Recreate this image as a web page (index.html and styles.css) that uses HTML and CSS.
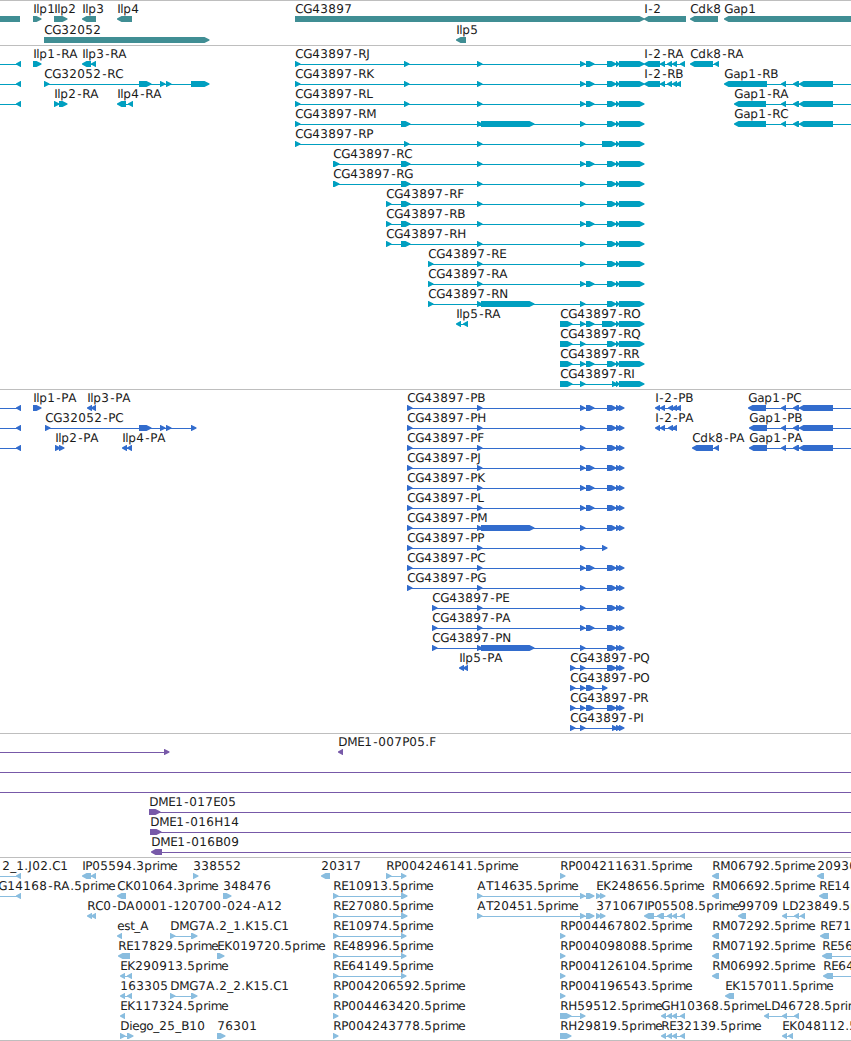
FILE: index.html
```html
<!DOCTYPE html>
<html lang="en">
<head>
    <meta charset="UTF-8">
    <meta name="viewport" content="width=device-width, initial-scale=1.0">
    <title>Genome Browser - CG43897</title>
    <link rel="stylesheet" href="styles.css">
</head>
<body>
    <main class="browser">
        <section class="track genes" id="genes"></section>
        <section class="track transcripts" id="transcripts"></section>
        <section class="track cds" id="cds"></section>
        <section class="track clones" id="clones"></section>
        <section class="track ests" id="ests"></section>
    </main>
    <script src="script.js"></script>
</body>
</html>
```

FILE: styles.css
```css
* {
    margin: 0;
    padding: 0;
    box-sizing: border-box;
}

body {
    background: #fff;
    font-family: "DejaVu Sans", sans-serif;
}

.browser {
    display: flex;
    flex-direction: column;
    width: 851px;
    overflow: hidden;
    border-bottom: 1px solid #bebebe;
}

.track {
    border-top: 1px solid #bebebe;
}

.track svg {
    display: block;
    width: 100%;
    height: 100%;
}

.track text {
    font-size: 12px;
    fill: #1a1a1a;
    text-rendering: geometricPrecision;
}

.shape,
.line {
    fill: currentColor;
}

.genes {
    height: 45px;
    color: #408e94;
}

.transcripts {
    height: 344px;
    color: #009fc0;
}

.cds {
    height: 344px;
    color: #326ccd;
}

.clones {
    height: 124px;
    color: #7759a8;
}

.ests {
    height: 183px;
    color: #89bddf;
}
```

FILE: script.js
```js
const NS = 'http://www.w3.org/2000/svg';
const WIDTH = 851;
const HEAD = 5;

// label letter widths, digits are 8
const advance = {
    A: 9, B: 8, C: 8, D: 9, E: 7, F: 7, G: 9, H: 9, I: 3, J: 4, K: 8, L: 7, M: 10,
    N: 9, O: 9, P: 7, Q: 9, R: 8, T: 7, a: 7, d: 8, e: 7, g: 7, i: 3, k: 7, l: 3,
    m: 10.5, o: 7, p: 8, r: 4.5, s: 6, t: 4, '-': 6, '.': 4, '_': 6
};

// shared exons of CG43897
const ex2 = '580-585 586-594';
const end = '607-616 616-619 619-644';
const cend = '607-616 616-621 619-624';
const gap = '781-786 793-799 799-833 900-940';

// each row is a list of [label, label x, strand, spans]
const tracks = {
    genes: [
        [['', 0, '-', '-10-20'], ['Ilp1', 33, '+', '33-41'], ['Ilp2', 54, '+', '54-67'],
         ['Ilp3', 82, '-', '82-96'], ['Ilp4', 117, '-', '117-132'], ['CG43897', 295, '+', '295-644'],
         ['I-2', 644, '-', '644-686'], ['Cdk8', 690, '-', '690-718'], ['Gap1', 724, '-', '724-900']],
        [['CG32052', 44, '+', '44-209'], ['Ilp5', 456, '-', '456-466']]
    ],
    transcripts: [
        [['', 0, '-', '-20--10 16-21'], ['Ilp1-RA', 33, '+', '33-41'], ['Ilp3-RA', 82, '-', '82-91 91-96'],
         ['CG43897-RJ', 295, '+', `295-300 404-409 477-482 ${ex2} ${end}`],
         ['I-2-RA', 644, '-', '644-660 660-665 667-672 672-677 680-685'], ['Cdk8-RA', 690, '-', '690-713 714-719']],
        [['', 0, '-', '-20--10 16-21'], ['CG32052-RC', 44, '+', '44-49 139-151 160-165 166-171 191-209'],
         ['CG43897-RK', 295, '+', `295-300 404-409 477-482 ${ex2} ${end}`],
         ['I-2-RB', 644, '-', '644-660 660-665 667-672 672-677 676-681'], ['Gap1-RB', 724, '-', `724-767 ${gap}`]],
        [['', 0, '-', '-20--10 16-21'], ['Ilp2-RA', 54, '+', '54-59 59-67'], ['Ilp4-RA', 117, '-', '117-126 128-133'],
         ['CG43897-RL', 295, '+', `295-300 404-409 477-482 ${ex2} ${end}`], ['Gap1-RA', 734, '-', `734-766 ${gap}`]],
        [['CG43897-RM', 295, '+', `295-300 401-410 477-482 481-534 580-585 ${end}`], ['Gap1-RC', 734, '-', `734-766 ${gap}`]],
        [['CG43897-RP', 295, '+', '295-300 404-409 477-482 580-585 602-616 616-619 619-644']],
        [['CG43897-RC', 333, '+', `333-339 401-410 477-482 ${ex2} ${end}`]],
        [['CG43897-RG', 333, '+', `333-339 401-410 477-482 580-585 ${end}`]],
        [['CG43897-RF', 386, '+', `386-391 401-410 477-482 580-585 ${end}`]],
        [['CG43897-RB', 386, '+', `386-391 401-410 477-482 ${ex2} ${end}`]],
        [['CG43897-RH', 386, '+', `386-391 401-410 477-482 580-585 ${end}`]],
        [['CG43897-RE', 428, '+', `428-433 477-482 580-585 ${end}`]],
        [['CG43897-RA', 428, '+', `428-433 477-482 ${ex2} ${end}`]],
        [['CG43897-RN', 428, '+', `428-433 477-482 481-534 580-585 ${end}`]],
        [['Ilp5-RA', 456, '-', '456-461 463-468'], ['CG43897-RO', 560, '+', `560-572 ${ex2} 602-616 616-619 619-644`]],
        [['CG43897-RQ', 560, '+', `560-572 580-585 ${end}`]],
        [['CG43897-RR', 560, '+', `560-572 ${ex2} ${end}`]],
        [['CG43897-RI', 560, '+', '560-572 580-585 612-617 616-619 619-644']]
    ],
    cds: [
        [['', 0, '-', '-20--10 16-21'], ['Ilp1-PA', 33, '+', '33-41'], ['Ilp3-PA', 87, '-', '87-92 91-96'],
         ['CG43897-PB', 407, '+', `407-412 477-482 ${ex2} ${cend}`],
         ['I-2-PB', 655, '-', '655-660 660-665 668-673 672-677 676-681'],
         ['Gap1-PC', 748, '-', `748-766 ${gap}`]],
        [['', 0, '-', '-20--10 16-21'], ['CG32052-PC', 45, '+', '45-50 139-151 160-165 166-171 191-196'],
         ['CG43897-PH', 407, '+', `407-412 477-482 580-585 ${cend}`],
         ['I-2-PA', 655, '-', '655-660 660-665 668-673 672-677'], ['Gap1-PB', 749, '-', `749-767 ${gap}`]],
        [['', 0, '-', '-20--10 16-21'], ['Ilp2-PA', 55, '+', '55-60 59-64'], ['Ilp4-PA', 122, '-', '122-127 127-132'],
         ['CG43897-PF', 407, '+', `407-412 477-482 580-585 ${cend}`],
         ['Cdk8-PA', 692, '-', '692-713 714-719'], ['Gap1-PA', 749, '-', `749-767 ${gap}`]],
        [['CG43897-PJ', 407, '+', `407-412 477-482 ${ex2} ${cend}`]],
        [['CG43897-PK', 407, '+', `407-412 477-482 ${ex2} ${cend}`]],
        [['CG43897-PL', 407, '+', `407-412 477-482 ${ex2} ${cend}`]],
        [['CG43897-PM', 407, '+', `407-412 477-482 481-534 580-585 ${cend}`]],
        [['CG43897-PP', 407, '+', '407-412 477-482 580-585 602-607']],
        [['CG43897-PC', 407, '+', `407-412 477-482 ${ex2} ${cend}`]],
        [['CG43897-PG', 407, '+', `407-412 477-482 580-585 ${cend}`]],
        [['CG43897-PE', 432, '+', `432-437 477-482 580-585 ${cend}`]],
        [['CG43897-PA', 432, '+', `432-437 477-482 ${ex2} ${cend}`]],
        [['CG43897-PN', 432, '+', `432-437 477-482 481-534 580-585 ${cend}`]],
        [['Ilp5-PA', 459, '-', '459-464 463-468'], ['CG43897-PQ', 570, '+', `570-575 580-585 ${cend}`]],
        [['CG43897-PO', 570, '+', `570-575 ${ex2} 602-607`]],
        [['CG43897-PR', 570, '+', `570-575 ${ex2} ${cend}`]],
        [['CG43897-PI', 570, '+', '570-575 580-585 612-617 616-621 619-624']]
    ],
    clones: [
        [['', 0, '+', '-20--10 164-169'], ['DME1-007P05.F', 338, '-', '338-343']],
        [['', 0, '+', '-20--10 900-940']],
        [['', 0, '+', '-20--10 900-940']],
        [['DME1-017E05', 149, '+', '149-160 900-940']],
        [['DME1-016H14', 150, '+', '150-161 900-940']],
        [['DME1-016B09', 151, '-', '151-162 900-940']]
    ],
    ests: [
        [['2_1.J02.C1', 2, '-', '-20--10 16-21'], ['IP05594.3prime', 82, '-', '82-91 91-96'],
         ['338552', 193, '+', '193-198'], ['20317', 321, '-', '321-330'], ['RP004246141.5prime', 386, '+', '386-391 401-406'],
         ['RP004211631.5prime', 560, '+', '560-565'], ['RM06792.5prime', 712, '-', '712-719'], ['20930', 817, '-', '817-824']],
        [['G14168-RA.5prime', -2, '-', '-20--10 16-21'], ['CK01064.3prime', 117, '-', '117-126'], ['348476', 223, '+', '223-231'],
         ['RE10913.5prime', 333, '+', '333-338 401-407'], ['AT14635.5prime', 477, '+', `477-482 ${ex2}`],
         ['EK248656.5prime', 596, '+', '596-601 600-605'], ['RM06692.5prime', 712, '-', '712-719'], ['RE14', 819, '-', '819-828']],
        [['RC0-DA0001-120700-024-A12', 87, '-', '87-92 91-96'], ['RE27080.5prime', 333, '+', '333-338 401-407'],
         ['AT20451.5prime', 477, '+', `477-482 ${ex2}`], ['371067', 596, '+', '596-601 600-605'],
         ['IP05508.5prime', 644, '-', '644-654 657-664 667-672 672-677 680-685'], ['99709', 738, '-', '738-746'],
         ['LD23849.5p', 782, '-', '782-787 794-799 800-805']],
        [['est_A', 117, '-', '117-122'], ['DMG7A.2_1.K15.C1', 170, '+', '170-175 191-197'],
         ['RE10974.5prime', 333, '+', '333-338 401-406'], ['RP004467802.5prime', 560, '+', '560-565'],
         ['RM07292.5prime', 712, '-', '712-719'], ['RE71', 820, '-', '820-829']],
        [['RE17829.5prime', 118, '-', '118-130'], ['EK019720.5prime', 217, '+', '217-224'],
         ['RE48996.5prime', 333, '+', '333-338 401-406'], ['RP004098088.5prime', 560, '+', '560-565'],
         ['RM07192.5prime', 712, '-', '712-719'], ['RE56', 822, '-', '822-832 900-940']],
        [['EK290913.5prime', 120, '-', '120-125 127-132'], ['RE64149.5prime', 333, '+', '333-338 401-406'],
         ['RP004126104.5prime', 560, '+', '560-565'], ['RM06992.5prime', 712, '-', '712-719'],
         ['RE64', 823, '-', '823-833 900-940']],
        [['163305', 120, '-', '120-125 127-132'], ['DMG7A.2_2.K15.C1', 170, '+', '170-175 191-197'],
         ['RP004206592.5prime', 333, '+', '333-338'], ['RP004196543.5prime', 560, '+', '560-565'],
         ['EK157011.5prime', 725, '-', '725-734']],
        [['EK117324.5prime', 120, '-', '120-125'], ['RP004463420.5prime', 333, '+', '333-338'],
         ['RH59512.5prime', 560, '+', '560-571 580-585'], ['GH10368.5prime', 661, '-', '661-666 667-672 672-677 680-685'],
         ['LD46728.5prime', 764, '-', '764-769 782-787 794-799']],
        [['Diego_25_B10', 120, '+', '120-125 127-133'], ['76301', 217, '+', '217-225'],
         ['RP004243778.5prime', 333, '+', '333-338'], ['RH29819.5prime', 560, '+', '560-571'],
         ['RE32139.5prime', 661, '-', '661-666 667-672 672-677 680-685'], ['EK048112.5prime', 782, '-', '782-787 788-793']]
    ]
};

function add(parent, name, attrs) {
    const el = document.createElementNS(NS, name);
    for (const key in attrs) el.setAttribute(key, attrs[key]);
    parent.appendChild(el);
    return el;
}

function drawLabel(svg, label, x, y) {
    const xs = [];
    for (const ch of label) {
        // centre the hyphen in its slot
        xs.push(ch === '-' ? x + 1 : x);
        x += advance[ch] || 8;
    }
    add(svg, 'text', { x: xs.join(' '), y: y }).textContent = label;
}

// a box with a pointed end, or only the point when it is short
function arrow(a, b, y, strand) {
    const head = Math.min(HEAD, b - a);
    if (strand === '+') {
        return `M${a} ${y - 3}H${b - head + 0.5}L${b + 0.5} ${y - 0.5}V${y + 0.5}L${b - head + 0.5} ${y + 3}H${a}Z`;
    }
    return `M${b} ${y - 3}H${a + head - 0.5}L${a} ${y - 0.5}V${y + 0.5}L${a + head - 0.5} ${y + 3}H${b}Z`;
}

function drawTrack(id, rows) {
    const svg = add(document.getElementById(id), 'svg', {});
    const pitch = id === 'genes' ? 21 : 20;

    rows.forEach((row, i) => {
        const y = 18 + i * pitch;
        for (const [label, x, strand, spans] of row) {
            const parts = spans.split(' ').map(s => s.match(/^(-?\d+)-(-?\d+)$/).slice(1).map(Number));
            if (parts.length > 1) {
                const from = Math.max(parts[0][0] + 2, 0);
                const to = Math.min(parts[parts.length - 1][1] - 2, WIDTH);
                add(svg, 'rect', { class: 'line', x: from, y: y, width: to - from, height: 1 });
            }
            const d = parts.map(([a, b]) => arrow(a, b, y, strand)).join('');
            add(svg, 'path', { class: 'shape', d: d });
            if (label) drawLabel(svg, label, x + 0.3, y - 6);
        }
    });
}

for (const id in tracks) drawTrack(id, tracks[id]);
```
